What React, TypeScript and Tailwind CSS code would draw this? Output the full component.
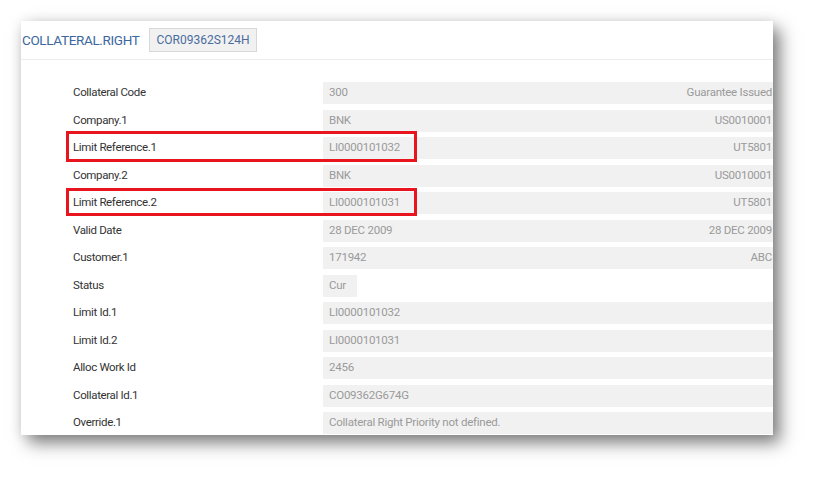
import React from "react";

type Row = { label: string; value: string; right?: string; narrow?: boolean; red?: "a" | "b" };

const rows: Row[] = [
  { label: "Collateral Code", value: "300", right: "Guarantee Issued" },
  { label: "Company.1", value: "BNK", right: "US0010001" },
  { label: "Limit Reference.1", value: "LI0000101032", right: "UT5801", red: "a" },
  { label: "Company.2", value: "BNK", right: "US0010001" },
  { label: "Limit Reference.2", value: "LI0000101031", right: "UT5801", red: "b" },
  { label: "Valid Date", value: "28 DEC 2009", right: "28 DEC 2009" },
  { label: "Customer.1", value: "171942", right: "ABC" },
  { label: "Status", value: "Cur", narrow: true },
  { label: "Limit Id.1", value: "LI0000101032" },
  { label: "Limit Id.2", value: "LI0000101031" },
  { label: "Alloc Work Id", value: "2456" },
  { label: "Collateral Id.1", value: "CO09362G674G" },
  { label: "Override.1", value: "Collateral Right Priority not defined." },
];

export default function App() {
  return (
    <div className="w-[815px] h-[477px] bg-white relative" style={{ fontFamily: "Roboto, 'Liberation Sans', sans-serif" }}>
      <div className="absolute left-[21px] top-[21px] w-[752px] h-[414px] bg-white overflow-hidden shadow-[7px_8px_16px_rgba(0,0,0,0.5),0_0_12px_rgba(0,0,0,0.08)]">
        <div className="h-[39px] flex items-center border-b border-[#ececec]">
          <span className="ml-[1px] text-[13.5px] tracking-[-0.35px] text-[#3c67a0]">COLLATERAL.RIGHT</span>
          <span className="ml-[10px] h-[24px] px-[6px] flex items-center bg-[#f1f1f1] border border-[#d8d8d8] text-[12px] text-[#4a6c9e]">
            COR09362S124H
          </span>
        </div>
        <div className="pt-[22px] flex flex-col gap-[5.5px]">
          {rows.map((r) => (
            <div key={r.label} className="relative flex h-[22px] items-center">
              {r.red === "a" && (
                <div className="absolute left-[45px] top-[-6px] w-[351px] h-[31px] border-[3px] border-[#e8141e]" />
              )}
              {r.red === "b" && (
                <div className="absolute left-[45px] top-[-4px] w-[351px] h-[28px] border-[3px] border-[#e8141e]" />
              )}
              <div className="w-[302px] pl-[52px] text-[11.5px] tracking-[-0.35px] text-[#333333]">{r.label}</div>
              <div
                className={
                  r.narrow
                    ? "h-[22px] w-[34px] bg-[#f1f1f1] flex items-center pl-[6px] text-[11.5px] tracking-[-0.25px] text-[#9a9a9a]"
                    : "h-[22px] flex-1 bg-[#f1f1f1] flex items-center justify-between pl-[6px] pr-[1px] text-[11.5px] tracking-[-0.25px] text-[#9a9a9a]"
                }
              >
                <span>{r.value}</span>
                {r.right && <span>{r.right}</span>}
              </div>
            </div>
          ))}
        </div>
      </div>
    </div>
  );
}
